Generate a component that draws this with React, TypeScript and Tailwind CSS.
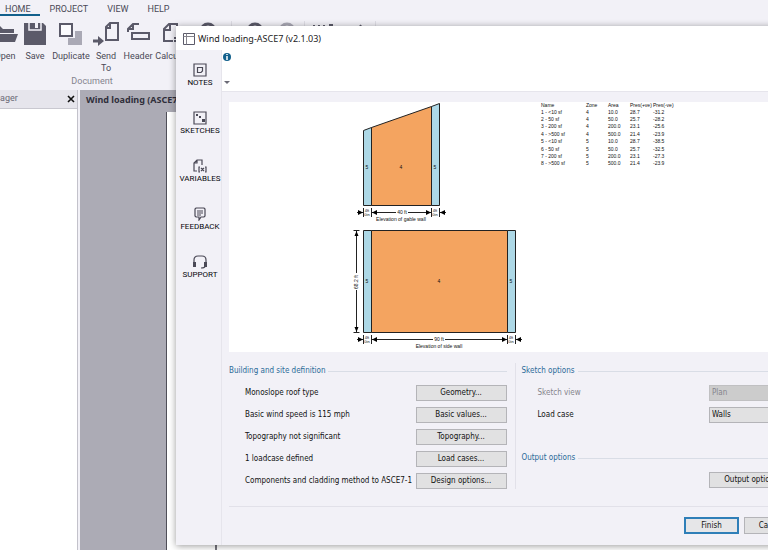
import React from 'react';

const tabs = ['HOME', 'PROJECT', 'VIEW', 'HELP'];

const OpenIcon = () => (
    <svg width="28" height="26" viewBox="0 0 28 26" fill="#5b5a69">
        <path d="M0 5h9l3 3h11v4H6L3 20H0z" />
        <path d="M7 13h20l-3 8H3z" />
    </svg>
);

const SaveIcon = () => (
    <svg width="22" height="26" viewBox="0 0 22 26">
        <path d="M0 2h19l3 3v19H0z" fill="#5b5a69" />
        <path d="M5 1v8h12V1" fill="none" stroke="#f2f1f7" strokeWidth="1.5" />
        <path d="M11 2h3v5h-3z" fill="#f2f1f7" />
    </svg>
);

const DuplicateIcon = () => (
    <svg width="24" height="26" viewBox="0 0 24 26">
        <path d="M9 10h14v14H9z" fill="#aaa9b5" />
        <path d="M0 1h16v16H0z" fill="#f2f1f7" />
        <path d="M1 3h12v12H1z" fill="#fbfbfd" stroke="#5b5a69" strokeWidth="2" />
    </svg>
);

const SendIcon = () => (
    <svg width="26" height="26" viewBox="0 0 26 26" fill="none" stroke="#5b5a69" strokeWidth="2">
        <path d="M17 2h8v17H13V6zM17 2v5h-5" />
        <path d="M0 20h7" strokeWidth="3" />
        <path d="M5 15l6 5-6 5z" fill="#5b5a69" stroke="none" />
    </svg>
);

const HeaderIcon = () => (
    <svg width="24" height="26" viewBox="0 0 24 26" fill="none" stroke="#5b5a69" strokeWidth="2">
        <path d="M13 3H7L2 8v3M7 3v5H2" />
        <path d="M6 12h17v6H6z" />
    </svg>
);

const CalcIcon = () => (
    <svg width="22" height="26" viewBox="0 0 22 26" fill="none" stroke="#5b5a69" strokeWidth="2">
        <path d="M10 20H1V8l5-5h8v10M7 3v6H1" />
        <path d="M11 17h9M11 20h9" />
    </svg>
);

const ArcIcon = ({ color }: { color: string }) => (
    <svg width="18" height="26" viewBox="0 0 18 26" fill="none" stroke={color} strokeWidth="3">
        <circle cx="9" cy="10" r="7" />
    </svg>
);

const tools = [
    { label: 'Open', icon: <OpenIcon />, width: 'w-[30px]' },
    { label: 'Save', icon: <SaveIcon />, width: 'w-[30px]' },
    { label: 'Duplicate', icon: <DuplicateIcon />, width: 'w-[42px]' },
    { label: 'Send To', icon: <SendIcon />, width: 'w-[28px]' },
    { label: 'Header', icon: <HeaderIcon />, width: 'w-[36px]' },
    { label: 'Calculate', icon: <CalcIcon />, width: 'w-[36px]' },
];

function Ribbon() {
    return (
        <header className="h-[90px] shrink-0 font-['Roboto',sans-serif] text-[9px] text-[#4a4956]">
            <nav className="flex h-4">
                {tabs.map((tab, i) => (
                    <a
                        key={tab}
                        href="#"
                        className={`flex items-center pt-1 leading-[10px] ${
                            i === 0 ? 'border-b-2 border-[#12608c] pl-[5px] pr-[9px]' : 'pb-[2px] pl-[10px] pr-[9px]'
                        }`}
                    >
                        {tab}
                    </a>
                ))}
            </nav>
            <div className="-ml-[10px] flex h-[60px] items-start pt-[5px]">
                {tools.map((tool) => (
                    <button key={tool.label} className={`flex shrink-0 flex-col items-center gap-[3px] ${tool.width}`}>
                        {tool.icon}
                        <span className={tool.label === 'Send To' ? 'w-6 leading-[12px]' : 'whitespace-nowrap leading-[12px]'}>
                            {tool.label}
                        </span>
                    </button>
                ))}
                <div className="ml-[7px] flex items-start gap-[14px]">
                    <ArcIcon color="#5b5a69" />
                    <div className="h-10 border-l border-[#dedde5]" />
                    <ArcIcon color="#5b5a69" />
                    <ArcIcon color="#aaa9b5" />
                </div>
                <div className="ml-2 flex h-10 items-start border-x border-[#dedde5] pl-2">
                    <svg width="62" height="26" viewBox="0 0 62 26" fill="none" stroke="#5b5a69" strokeWidth="2">
                        <path d="M1 4v10M6 4v10M11 4v10M16 4h4M48 4l-5 8" />
                    </svg>
                </div>
            </div>
            <div className="w-[184px] text-center leading-[10px] text-[#84838e]">Document</div>
        </header>
    );
}

function Workspace() {
    return (
        <div className="flex min-h-0 flex-1">
            <aside className="flex w-[78px] shrink-0 flex-col border-r border-[#c3c2cb] bg-white">
                <div className="flex h-[19px] items-center justify-between border-b border-[#c9c8d0] bg-[#e6e5ec] pr-[2px] font-['Roboto',sans-serif] text-[9px] text-[#6b6a76]">
                    <span>ager</span>
                    <button aria-label="Close">
                        <svg width="8" height="8" viewBox="0 0 8 8" stroke="#111" strokeWidth="1.6">
                            <path d="M1 1l6 6M7 1l-6 6" />
                        </svg>
                    </button>
                </div>
            </aside>
            <main className="ml-[2px] flex min-w-0 flex-1 flex-col bg-[#acabb5]">
                <div className="h-[22px] pl-[6px] font-['Noto_Sans',sans-serif] text-[9px] font-bold leading-[20px] text-[#302f3b]">
                    Wind loading (ASCE7)
                </div>
                <div className="ml-[86px] flex-1 border-l border-[#4f4e58] bg-white">
                    <div className="h-full w-[50px] border-r-2 border-[#77767f]" />
                </div>
            </main>
        </div>
    );
}

const sideItems = [
    {
        label: 'NOTES',
        icon: <path d="M1 1h12v12H1zM4.500 4.500h5v3.500L8 9.500H4.500z" />,
    },
    {
        label: 'SKETCHES',
        icon: (
            <>
                <path d="M1 1h12v12H1z" />
                <path d="M3 3h2v2H3zM9 8h3v3H9zM6 5h2v2H6z" fill="#4a4956" stroke="none" />
            </>
        ),
    },
    {
        label: 'VARIABLES',
        icon: (
            <>
                <path d="M9 6V1H4L1 4v8h3M4 1v3H1" />
                <path d="M7 8H6v5h1M12 8h1v5h-1M8 9l3 3M11 9l-3 3" />
            </>
        ),
    },
    {
        label: 'FEEDBACK',
        icon: (
            <>
                <path d="M3 1h8l1 1v7l-1 1H8l-2 3v-3H3l-1-1V2z" />
                <path d="M4 4h6M4 6h6M4 8h4" />
            </>
        ),
    },
    {
        label: 'SUPPORT',
        icon: (
            <>
                <path d="M1 9V5q0-4 4-4h4q4 0 4 4v4M12 11q0 2-4 2" />
                <path d="M0 7h3v5H0zM11 7h3v5h-3z" fill="#4a4956" stroke="none" />
            </>
        ),
    },
];

function Sidebar() {
    return (
        <nav className="flex w-[46px] shrink-0 flex-col border-r border-[#e6e5ec] pt-[13px] font-['Roboto',sans-serif] text-[8px] text-[#08080c]">
            {sideItems.map((item) => (
                <button key={item.label} className="flex h-12 w-full flex-col items-center pl-[3px]">
                    <svg width="14" height="14" viewBox="0 0 14 14" fill="none" stroke="#4a4956" strokeWidth="1.2">
                        {item.icon}
                    </svg>
                    <span className="leading-[11px]">{item.label}</span>
                </button>
            ))}
        </nav>
    );
}

const pressures = [
    ['1 - <10 sf', '4', '10.0', '28.7', '-31.2'],
    ['2 - 50 sf', '4', '50.0', '25.7', '-28.2'],
    ['3 - 200 sf', '4', '200.0', '23.1', '-25.6'],
    ['4 - >500 sf', '4', '500.0', '21.4', '-23.9'],
    ['5 - <10 sf', '5', '10.0', '28.7', '-38.5'],
    ['6 - 50 sf', '5', '50.0', '25.7', '-32.5'],
    ['7 - 200 sf', '5', '200.0', '23.1', '-27.3'],
    ['8 - >500 sf', '5', '500.0', '21.4', '-23.9'],
];

// arrow heads: right-pointing and left-pointing, tip at x
const right = (x: number, y: number) => `M${x} ${y}l-5-2.500v5z`;
const left = (x: number, y: number) => `M${x} ${y}l5-2.500v5z`;

function Elevations() {
    return (
        <svg width="174" height="250" viewBox="350 102 174 250" className="shrink-0 font-['Liberation_Sans',sans-serif] text-[5px]">
            <g stroke="#222" strokeWidth="1">
                <path d="M363.500 130.500L371.500 127.500V205.500H363.500z" fill="#add8e6" />
                <path d="M371.500 127.500L431.500 106.500V205.500H371.500z" fill="#f4a460" />
                <path d="M431.500 106.500L439.500 103.500V205.500H431.500z" fill="#add8e6" />
                <path d="M363.500 230.500h8v102h-8zM507.500 230.500h8v102h-8z" fill="#add8e6" />
                <path d="M371.500 230.500h136v102h-136z" fill="#f4a460" />
                <path
                    d="M363.500 208v9M371.500 208v9M431.500 208v9M439.500 208v9M363.500 335v9M371.500 335v9M507.500 335v9M515.500 335v9M353.500 230.500h6M353.500 332.500h6M356.500 231v42M356.500 290v42"
                    fill="none"
                />
                <path
                    d="M357 212.500h6M372 212.500h24M408 212.500h23M440 212.500h6M357 339.500h6M372 339.500h61M445 339.500h62M516 339.500h6"
                    fill="none"
                />
            </g>
            <path
                d={[
                    right(363, 212.5), left(372, 212.5), right(431, 212.5), left(440, 212.5),
                    right(363, 339.5), left(372, 339.5), right(507, 339.5), left(516, 339.5),
                    'M356.500 231l-2 5h4zM356.500 332l-2-5h4z',
                ].join('')}
            />
            <g textAnchor="middle" fill="#111">
                <text x="367" y="169">5</text>
                <text x="401" y="169">4</text>
                <text x="435" y="169">5</text>
                <text x="367" y="283">5</text>
                <text x="439" y="283">4</text>
                <text x="511" y="283">5</text>
                <text x="402" y="214">40 ft</text>
                <text x="401" y="221">Elevation of gable wall</text>
                <text x="439" y="341">90 ft</text>
                <text x="439" y="348">Elevation of side wall</text>
                <text transform="translate(358 282) rotate(-90)">68.2 ft</text>
            </g>
            <g textAnchor="middle" fill="#111" className="text-[4px]">
                {[[367, 212], [435, 212], [367, 339], [511, 339]].map(([x, y]) => (
                    <text key={`${x}-${y}`} x={x} y={y}>
                        4ft
                        <tspan x={x} dy="4">0in</tspan>
                    </text>
                ))}
            </g>
        </svg>
    );
}

function SketchPanel() {
    return (
        <div className="flex h-[250px] items-start bg-white pl-[121px]">
            <Elevations />
            <table className="ml-[17px] h-[65px] w-[136px] table-fixed text-left font-['Liberation_Sans',sans-serif] text-[5px] leading-[6px] text-[#111]">
                <colgroup>
                    <col className="w-[45px]" />
                    <col className="w-[22px]" />
                    <col className="w-[22px]" />
                    <col className="w-[23px]" />
                    <col />
                </colgroup>
                <thead>
                    <tr>
                        {['Name', 'Zone', 'Area', 'Pres(+ve)', 'Pres(-ve)'].map((h) => (
                            <th key={h} className="whitespace-nowrap p-0 font-normal">{h}</th>
                        ))}
                    </tr>
                </thead>
                <tbody>
                    {pressures.map((row) => (
                        <tr key={row[0]}>
                            {row.map((cell, i) => (
                                <td key={i} className="whitespace-nowrap p-0">{cell}</td>
                            ))}
                        </tr>
                    ))}
                </tbody>
            </table>
        </div>
    );
}

const definitions = [
    ['Monoslope roof type', 'Geometry...'],
    ['Basic wind speed is 115 mph', 'Basic values...'],
    ['Topography not significant', 'Topography...'],
    ['1 loadcase defined', 'Load cases...'],
    ['Components and cladding method to ASCE7-1', 'Design options...'],
];

function PushButton({ children }: { children: React.ReactNode }) {
    return (
        <button className="h-4 w-[91px] shrink-0 border border-[#b4b4b8] bg-[#e1e1e2] text-center leading-[14px]">
            {children}
        </button>
    );
}

function GroupTitle({ children }: { children: React.ReactNode }) {
    return (
        <h2 className="flex h-4 items-center gap-[3px] whitespace-nowrap leading-[16px] text-[#2a6a98] after:h-px after:flex-1 after:bg-[#d9dde6]">
            {children}
        </h2>
    );
}

function Options() {
    return (
        <div className="mt-[11px] grid grid-cols-2">
            <section className="min-w-0 pr-2">
                <GroupTitle>Building and site definition</GroupTitle>
                <div className="mt-[6px] flex flex-col gap-[6px]">
                    {definitions.map(([text, action]) => (
                        <div key={text} className="flex h-4 items-center justify-between pl-4">
                            <span className="whitespace-nowrap leading-[16px]">{text}</span>
                            <PushButton>{action}</PushButton>
                        </div>
                    ))}
                </div>
            </section>
            <section className="min-w-0 border-l border-[#e2e1e9] pl-[6px]">
                <GroupTitle>Sketch options</GroupTitle>
                <div className="mt-[6px] flex flex-col gap-[6px]">
                    <div className="flex h-4 items-center justify-between pl-4">
                        <label htmlFor="view" className="text-[#85848c]">Sketch view</label>
                        <select id="view" disabled className="h-4 w-[91px] appearance-none border border-[#c0c0c2] bg-[#cccccc] pl-[2px] text-[#85848c] opacity-100">
                            <option>Plan</option>
                        </select>
                    </div>
                    <div className="flex h-4 items-center justify-between pl-4">
                        <label htmlFor="load">Load case</label>
                        <select id="load" className="h-4 w-[91px] appearance-none border border-[#b4b4b8] bg-[#e1e1e2] pl-[2px]">
                            <option>Walls</option>
                        </select>
                    </div>
                </div>
                <div className="mt-[27px]">
                    <GroupTitle>Output options</GroupTitle>
                </div>
                <div className="mt-[6px] flex justify-end">
                    <PushButton>Output options...</PushButton>
                </div>
            </section>
        </div>
    );
}

function WindLoadingDialog() {
    return (
        <div
            role="dialog"
            aria-label="Wind loading"
            className="absolute top-[26px] bottom-[5px] left-[176px] -right-10 flex flex-col bg-[#f2f1f7] shadow-[0_1px_7px_rgba(0,0,0,0.4)]"
        >
            <div className="flex h-6 shrink-0 items-center gap-[3px] bg-white pt-px pl-[7px] font-['Noto_Sans',sans-serif] text-[9px] text-[#222]">
                <svg width="12" height="12" viewBox="0 0 12 12" fill="none" stroke="#5b5a69">
                    <path d="M.5.5h11v11H.5z" />
                    <path d="M3.500.5v11M.5 3.500h11" stroke="#85848c" />
                </svg>
                Wind loading-ASCE7 (v2.1.03)
            </div>
            <div className="flex min-h-0 flex-1">
                <Sidebar />
                <div className="flex min-w-0 flex-1 flex-col font-['DejaVu_Sans_Condensed','DejaVu_Sans',sans-serif] text-[8px] text-[#111]">
                    <div className="flex h-[42px] shrink-0 flex-col items-start justify-between border-b border-[#e6e5ec] bg-white pt-[3px] pb-[5px] pl-[1px]">
                        <svg width="8" height="8" viewBox="0 0 8 8">
                            <circle cx="4" cy="4" r="4" fill="#12608c" />
                            <path d="M4 1v1M4 3v4" stroke="#fff" strokeWidth="1.5" />
                        </svg>
                        <svg width="8" height="6" viewBox="0 0 8 6">
                            <path d="M1 1h6L4 4z" fill="#6b6a76" />
                        </svg>
                    </div>
                    <div className="pt-[10px] pr-2 pl-[7px]">
                        <SketchPanel />
                        <Options />
                    </div>
                    <div className="mt-auto ml-[7px] flex h-[39px] shrink-0 items-start justify-end gap-[5px] border-t border-[#e2e1e9] pt-[10px] pr-[10px]">
                        <button className="h-[17px] w-[55px] border-2 border-[#2f7fb8] bg-[#e6e6e8] leading-[12px]">Finish</button>
                        <button className="h-[17px] w-[54px] border border-[#b4b4b8] bg-[#e1e1e2] leading-[14px]">Cancel</button>
                    </div>
                </div>
            </div>
        </div>
    );
}

export default function App() {
    return (
        <div className="relative flex h-screen flex-col overflow-hidden bg-[#f2f1f7]">
            <Ribbon />
            <Workspace />
            <WindLoadingDialog />
        </div>
    );
}
